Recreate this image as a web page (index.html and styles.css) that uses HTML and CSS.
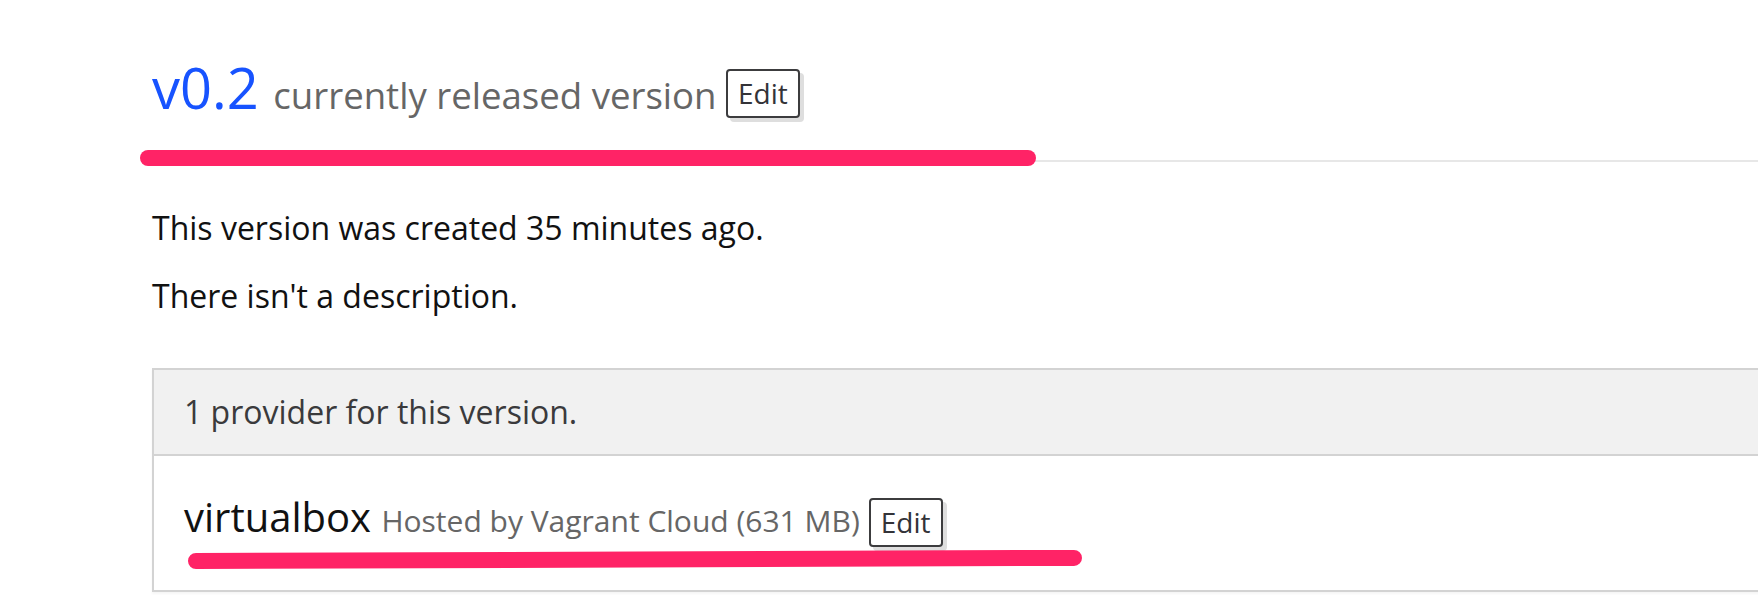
FILE: index.html
```html
<!DOCTYPE html>
<html lang="en">
<head>
<meta charset="utf-8">
<title>v0.2</title>
<link rel="stylesheet" href="styles.css">
</head>
<body>
<main class="main">
  <h2 class="version-title"><a class="version-link" href="#">v0.2</a> <small class="version-note">currently released version <button class="btn-edit btn-edit--title" type="button">Edit</button></small></h2>
  <p class="para">This version was created 35 minutes ago.</p>
  <p class="para">There isn't a description.</p>
  <section class="panel">
    <div class="panel-head">1 provider for this version.</div>
    <div class="panel-row">
      <h3 class="provider"><span class="provider-name">virtualbox</span> <small class="provider-note">Hosted by Vagrant Cloud (631 MB)</small><button class="btn-edit btn-edit--row" type="button">Edit</button></h3>
    </div>
  </section>
</main>
<div class="mark mark--title"></div>
<div class="mark mark--row"></div>
</body>
</html>
```
FILE: styles.css
```css
html, body {
  margin: 0;
  padding: 0;
  overflow: hidden;
  background: #ffffff;
}
body {
  position: relative;
  width: 1758px;
  height: 616px;
  font-family: "Open Sans", "Noto Sans", sans-serif;
  color: #141414;
}
.main {
  padding-left: 152px;
  width: 1720px;
}
.version-title {
  margin: 59px 0 42px;
  padding-bottom: 42px;
  border-bottom: 2px solid #e7e7e7;
  font-size: 56px;
  line-height: 1;
  font-weight: 400;
}
.version-link {
  color: #1753ff;
  text-decoration: none;
}
.version-note {
  font-size: 36.6px;
  color: #666666;
}
.btn-edit {
  display: inline-block;
  box-sizing: border-box;
  height: 49px;
  padding: 0 10px;
  border: 2px solid #3c3c3e;
  border-radius: 4px;
  background: #ffffff;
  box-shadow: 4px 4px 0 #dedede;
  font-family: "Open Sans", "Noto Sans", sans-serif;
  font-size: 28px;
  line-height: 45px;
  color: #333338;
  cursor: pointer;
}
.btn-edit--title {
  vertical-align: 5px;
}
.btn-edit--row {
  vertical-align: -1px;
  margin-left: 9px;
}
.para {
  margin: 0 0 20px;
  font-size: 32px;
  line-height: 48px;
  color: #111111;
}
.panel {
  margin-top: 48px;
  border: 2px solid #d3d3d3;
  box-shadow: 0 2px 2px rgba(0, 0, 0, 0.04);
}
.panel-head {
  padding: 18px 30px;
  background: #f1f1f1;
  border-bottom: 2px solid #d3d3d3;
  font-size: 32px;
  line-height: 48px;
  color: #3a3a3c;
}
.panel-row {
  padding: 41px 30px 43px;
  background: #ffffff;
}
.provider {
  margin: 0;
  font-size: 40px;
  line-height: 1;
  font-weight: 400;
  color: #111111;
}
.provider-note {
  font-size: 30px;
  color: #666666;
}
.mark {
  position: absolute;
  height: 16px;
  border-radius: 8px;
  background: #ff2366;
}
.mark--title {
  left: 140px;
  top: 150px;
  width: 896px;
}
.mark--row {
  left: 188px;
  top: 553px;
  width: 894px;
  transform: rotate(-0.2deg);
  transform-origin: left center;
}
```
